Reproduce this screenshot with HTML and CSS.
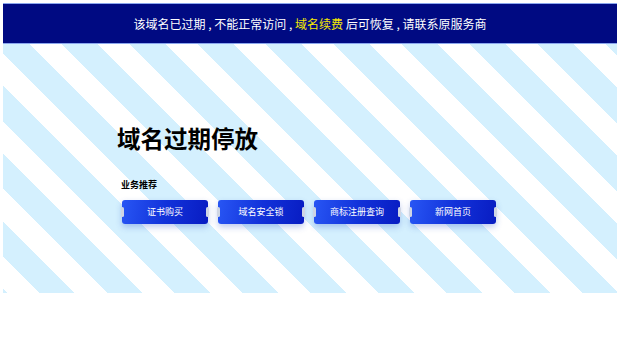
FILE: index.html
```html
<!DOCTYPE html>
<html lang="zh-CN">
<head>
  <meta charset="UTF-8" />
  <meta name="viewport" content="width=device-width, initial-scale=1.0"/>
  <title>域名过期停放</title>
  <link rel="stylesheet" href="styles.css">
</head>
<body>
<div class="page">
  <div class="notice">
    该域名已过期 , 不能正常访问 , <span class="hl">域名续费</span> 后可恢复 , 请联系原服务商
  </div>

  <div class="stage">
    <h1>域名过期停放</h1>
    <div class="label">业务推荐</div>
    <div class="btn-row">
      <a class="ticket" href="#">证书购买</a>
      <a class="ticket" href="#">域名安全锁</a>
      <a class="ticket" href="#">商标注册查询</a>
      <a class="ticket" href="#">新网首页</a>
    </div>
  </div>
</div>
</body>
</html>
```

FILE: styles.css
```css
html, body {
  margin: 0;
  background-color: #fff;
  font-family: "Noto Sans CJK SC", "Noto Sans", sans-serif;
}

.page {
  padding: 3px 3px 0;
}

.notice {
  height: 39px;
  line-height: 39px;
  background-color: #000a82;
  border-top: 1px solid #8aa6ee;
  border-bottom: 1px solid #8aa6ee;
  color: #fff;
  font-size: 12px;
  text-align: center;
}

.notice .hl {
  color: #f5e800;
}

.stage {
  height: 249px;
  box-sizing: border-box;
  padding: 80px 0 0 114px;
  background: repeating-linear-gradient(45deg,
    #d4f0fe 0 2.83px,
    #fff 2.83px 25.46px,
    #d4f0fe 25.46px 48.08px);
}

.stage h1 {
  margin: 0;
  font-size: 23.5px;
  line-height: 28px;
  font-weight: bold;
  color: #000;
}

.label {
  margin: 27px 0 0 4px;
  font-size: 9px;
  line-height: 12px;
  font-weight: bold;
  color: #000;
}

.btn-row {
  display: flex;
  gap: 10px;
  margin: 9px 0 0 5px;
}

.ticket {
  position: relative;
  width: 86px;
  height: 24px;
  line-height: 24px;
  border-radius: 3px;
  background: linear-gradient(100deg, #2856f4 0%, #1232da 50%, #081cc2 100%);
  box-shadow: 0 3px 6px rgba(40, 80, 200, 0.3);
  color: #fff;
  font-size: 9px;
  text-align: center;
  text-decoration: none;
}

.ticket::before,
.ticket::after {
  content: "";
  position: absolute;
  top: 7px;
  width: 3px;
  height: 10px;
  border-radius: 2px;
  background-color: #cfd6e4;
}

.ticket::before {
  left: -1px;
}

.ticket::after {
  right: -1px;
}
```
